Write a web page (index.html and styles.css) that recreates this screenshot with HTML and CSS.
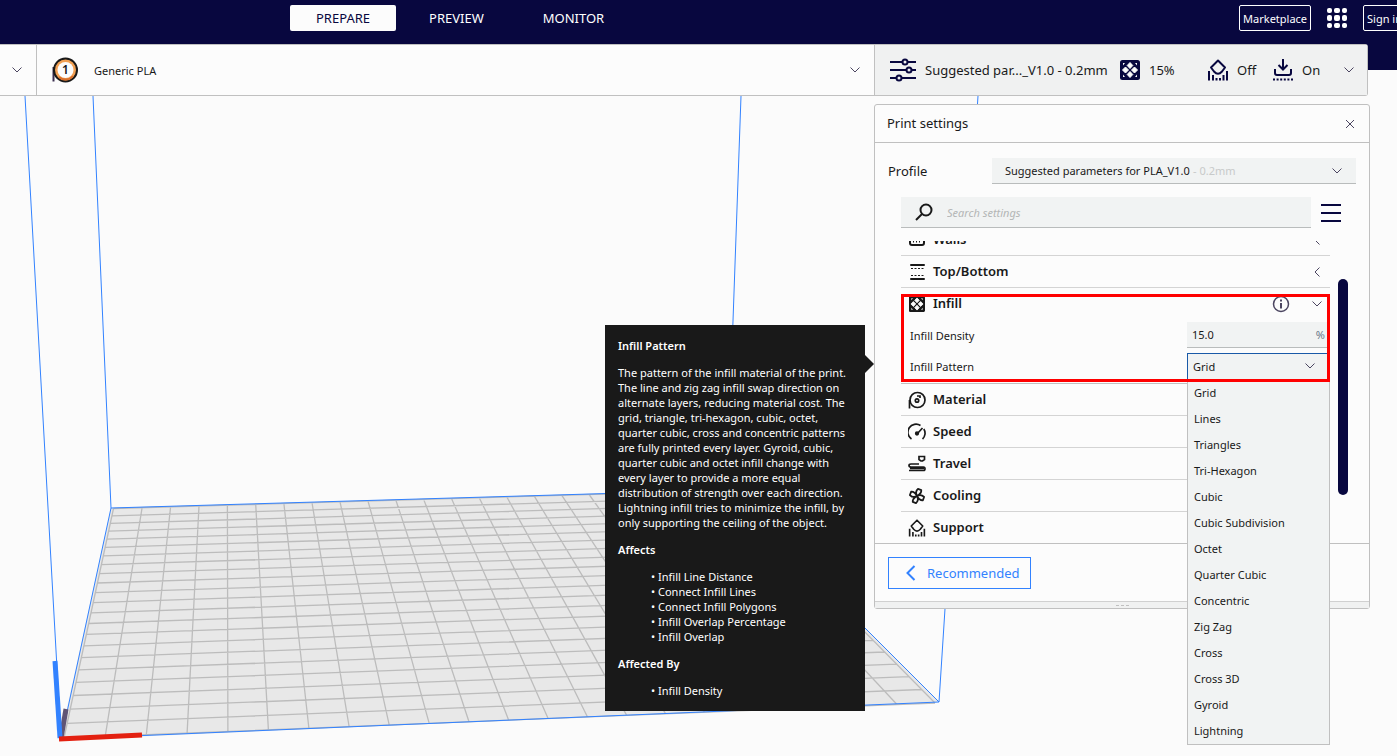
FILE: index.html
```html
<!DOCTYPE html>
<html lang="en">
<head>
<meta charset="utf-8">
<title>Print settings</title>
<link rel="stylesheet" href="styles.css">
</head>
<body>
<svg class="symbols" aria-hidden="true">
  <symbol id="chev-down" viewBox="0 0 12 12"><path d="M1.500 3.500 6 8l4.500-4.500" fill="none" stroke="currentColor"/></symbol>
  <symbol id="chev-left" viewBox="0 0 12 12"><path d="M8.500 1.500 4 6 8.500 10.500" fill="none" stroke="currentColor"/></symbol>
  <symbol id="infill" viewBox="0 0 20 20">
    <rect width="20" height="20" rx="2.500" fill="currentColor"/>
    <path d="M10 2.500 12.800 5.500 10 8.500 7.200 5.500zM10 11.500l2.800 3-2.800 3-2.800-3zM5.500 7 8.500 10 5.500 13 2.500 10zM14.500 7l3 3-3 3-3-3z" fill="#fcfcfc" stroke="#fcfcfc" stroke-linejoin="round"/>
    <path d="M3 3h2L3 5.500zM17 3h-2l2 2.500zM3 17h2l-2-2.500zM17 17h-2l2-2.500z" fill="#fcfcfc"/>
  </symbol>
  <symbol id="support" viewBox="0 0 20 22">
    <path d="M10 1.500 17 8.500 14 12.500q-4 4.500-8 0L3 8.500z" fill="none" stroke="currentColor" stroke-width="2" stroke-linejoin="round"/>
    <path d="M1 12v9.500M5 16v5.500M8.500 19v2.500M12 19v2.500M15.500 16v5.500M19 12v9.500" stroke="currentColor" stroke-width="2"/>
  </symbol>
</svg>
<div class="app">
  <svg class="scene" viewBox="0 0 1397 756" preserveAspectRatio="xMinYMin slice" aria-hidden="true">
    <path class="bed" d="M111 508 727 490 939 702 60 740z"/>
    <path class="grid" id="grid"/>
    <path class="volume" d="M25 96 61 740 111 508 93 96M111 508 727 490 741 96M727 490 939 702 978 96M61 739 939 702"/>
    <path class="axis-y" d="M61 738 66 709"/>
    <path class="axis-z" d="M60 738 55 661"/>
    <path class="axis-x" d="M59 739 142 735"/>
  </svg>

  <header class="header">
    <nav class="tabs">
      <button class="tab active">PREPARE</button>
      <button class="tab">PREVIEW</button>
      <button class="tab">MONITOR</button>
    </nav>
    <div class="account">
      <button class="outline">Marketplace</button>
      <button class="apps" aria-label="Applications">
        <svg width="20" height="20" fill="currentColor"><rect width="5" height="5" rx="2"/><rect x="7" width="6" height="5" rx="2"/><rect x="15" width="5" height="5" rx="2"/><rect y="7" width="5" height="6" rx="2"/><rect x="7" y="7" width="6" height="6" rx="2"/><rect x="15" y="7" width="5" height="6" rx="2"/><rect y="15" width="5" height="5" rx="2"/><rect x="7" y="15" width="6" height="5" rx="2"/><rect x="15" y="15" width="5" height="5" rx="2"/></svg>
      </button>
      <button class="outline">Sign in</button>
    </div>
  </header>

  <div class="stage-bar">
    <button class="printer" aria-label="Printer"><svg class="chev"><use href="#chev-down"/></svg></button>
    <button class="material">
      <svg class="spool" viewBox="0 0 28 28">
        <path d="M2.500 11v14.500" stroke="#3c3050" stroke-width="2"/>
        <circle cx="14.500" cy="14" r="11.500" fill="#f2a154" stroke="#191919" stroke-width="2"/>
        <path d="M8 21a9.500 9.500 0 0 0 14-1" fill="none" stroke="#d96f2c" stroke-width="2"/>
        <circle cx="14.500" cy="14" r="8" fill="#fcfcfc"/>
        <text x="14.500" y="18" text-anchor="middle" class="spool-no">1</text>
      </svg>
      <span>Generic PLA</span>
      <svg class="chev"><use href="#chev-down"/></svg>
    </button>
    <button class="summary">
      <svg class="sum-main" viewBox="0 0 26 24" fill="none" stroke="currentColor" stroke-width="2"><path d="M0 4h12M18 4h8M0 12h16M22 12h4M0 20h6M12 20h14"/><circle cx="15" cy="4" r="2.500"/><circle cx="19" cy="12" r="2.500"/><circle cx="9" cy="20" r="2.500"/></svg>
      <span class="sum-profile">Suggested par..._V1.0 - 0.2mm</span>
      <svg class="i20"><use href="#infill"/></svg><span class="sum-infill">15%</span>
      <svg class="i22"><use href="#support"/></svg><span class="sum-support">Off</span>
      <svg class="i22" viewBox="0 0 20 22" fill="none" stroke="currentColor" stroke-width="2"><path d="M10 0v10M5.500 6 10 10.500 14.500 6"/><path d="M2 10v4q0 2 2 2h12q2 0 2-2v-4"/><path d="M0 20.500h20" stroke-dasharray="2 1.600"/></svg><span>On</span>
      <svg class="chev"><use href="#chev-down"/></svg>
    </button>
  </div>

  <main class="workspace">
    <section class="panel">
      <div class="panel-head">
        <h1>Print settings</h1>
        <button class="close" aria-label="Close"><svg width="10" height="10" stroke="currentColor"><path d="M1 1l8 8M9 1 1 9"/></svg></button>
      </div>
      <div class="profile-row">
        <label for="profile">Profile</label>
        <div class="profile-field">
          <select id="profile"><option>Suggested parameters for PLA_V1.0</option></select>
          <span class="muted">- 0.2mm</span>
          <svg class="chev"><use href="#chev-down"/></svg>
        </div>
      </div>
      <div class="search-row">
        <div class="search">
          <svg width="18" height="18" fill="none" stroke="currentColor" stroke-width="2"><circle cx="11" cy="7" r="5.500"/><path d="M7 11 1 17"/></svg>
          <input type="search" aria-label="Search settings" placeholder="Search settings">
        </div>
        <button class="menu-btn" aria-label="Setting visibility"><svg width="20" height="18" stroke="currentColor" stroke-width="2"><path d="M0 1h20M0 9h20M0 17h20"/></svg></button>
      </div>

      <div class="settings">
        <div class="clip">
          <div class="rows">
            <button class="cat"><svg viewBox="0 0 18 18" fill="none" stroke="currentColor" stroke-width="2"><path d="M2 2v10q0 2 2 2h10q2 0 2-2V2"/><path d="M5 10.500h9" stroke-dasharray="1 2"/></svg><span>Walls</span><svg class="chev"><use href="#chev-left"/></svg></button>
            <button class="cat"><svg viewBox="0 0 18 18" fill="none" stroke="currentColor" stroke-width="2"><path d="M3 2h13M3 16h13" stroke-linecap="round"/><path d="M3 5.500h13M3 12.500h13" stroke-width="1" stroke-dasharray="2 1.500"/></svg><span>Top/Bottom</span><svg class="chev"><use href="#chev-left"/></svg></button>
            <button class="cat open"><svg viewBox="-1 -1 20 20"><use href="#infill" width="18" height="18"/></svg><span>Infill</span>
              <svg class="info" viewBox="0 0 18 18" fill="none" stroke="currentColor"><circle cx="9" cy="9" r="7.500" stroke-width="1.500"/><path d="M9 4.500v2M9 8v5.500" stroke-width="2"/></svg>
              <svg class="chev"><use href="#chev-down"/></svg></button>
            <div class="setting"><label for="density">Infill Density</label><div class="field"><input id="density" type="text" value="15.0"><span class="unit">%</span></div></div>
            <div class="setting last"><label for="pattern">Infill Pattern</label><div class="field focus"><select id="pattern"><option>Grid</option><option>Lines</option><option>Triangles</option></select><svg class="chev"><use href="#chev-down"/></svg></div></div>
            <button class="cat"><svg viewBox="0 0 18 18" fill="none" stroke="currentColor" stroke-width="1.700"><circle cx="9.500" cy="9" r="7.500"/><path d="M1.500 9v8.500"/><circle cx="9" cy="9.500" r="1.700"/><path d="M9 5h3v2"/></svg><span>Material</span><svg class="chev"><use href="#chev-left"/></svg></button>
            <button class="cat"><svg viewBox="0 0 18 18" fill="none" stroke="currentColor" stroke-width="1.700"><path d="M3.500 16A7.800 7.800 0 0 1 12.500 2.500M15.800 6a7.800 7.800 0 0 1-1.300 10M9 11l5.500-6"/><circle cx="9" cy="10.500" r="1.300" fill="currentColor"/></svg><span>Speed</span><svg class="chev"><use href="#chev-left"/></svg></button>
            <button class="cat"><svg viewBox="0 0 18 18" fill="none" stroke="currentColor" stroke-width="1.700"><path d="M11 1.500h5.500v3l-2 1.500h-1.500l-2-1.500zM11 9H3q-2 0-2 1.500T3 12h12.500q1.500 0 1.500 1.800t-1.500 1.700H1M2 13.500h14"/></svg><span>Travel</span><svg class="chev"><use href="#chev-left"/></svg></button>
            <button class="cat"><svg viewBox="0 0 18 18" fill="none" stroke="currentColor" stroke-width="1.800" stroke-linejoin="round"><g transform="rotate(20 9 9)"><path d="M9 9Q5.500 6 7.500 2h3.500q1.500 3-2 7zQ12 5.500 16 7.500V11q-3 1.500-7-2zQ12.500 12 10.500 16H7q-1.500-3 2-7zQ6 12.500 2 10.500V7q3-1.500 7 2z"/></g></svg><span>Cooling</span><svg class="chev"><use href="#chev-left"/></svg></button>
            <button class="cat"><svg viewBox="0 0 18 18"><use href="#support" width="18" height="18"/></svg><span>Support</span><svg class="chev"><use href="#chev-left"/></svg></button>
          </div>
        </div>
        <div class="highlight"></div>
        <ul class="menu" role="listbox" aria-label="Infill Pattern">
          <li role="option">Grid</li><li role="option">Lines</li><li role="option">Triangles</li><li role="option">Tri-Hexagon</li><li role="option">Cubic</li><li role="option">Cubic Subdivision</li><li role="option">Octet</li><li role="option">Quarter Cubic</li><li role="option">Concentric</li><li role="option">Zig Zag</li><li role="option">Cross</li><li role="option">Cross 3D</li><li role="option">Gyroid</li><li role="option">Lightning</li>
        </ul>
        <div class="scrollbar"></div>
      </div>

      <div class="panel-foot">
        <button class="recommended"><svg width="10" height="16" fill="none" stroke="currentColor" stroke-width="2"><path d="M8.500 1 1.500 8l7 7"/></svg>Recommended</button>
      </div>
      <div class="grip"><i></i><i></i><i></i></div>

      <aside class="tooltip" role="tooltip">
        <h2>Infill Pattern</h2>
        <p>The pattern of the infill material of the print. The line and zig zag infill swap direction on alternate layers, reducing material cost. The grid, triangle, tri-hexagon, cubic, octet, quarter cubic, cross and concentric patterns are fully printed every layer. Gyroid, cubic, quarter cubic and octet infill change with every layer to provide a more equal distribution of strength over each direction. Lightning infill tries to minimize the infill, by only supporting the ceiling of the object.</p>
        <h2>Affects</h2>
        <ul><li>Infill Line Distance</li><li>Connect Infill Lines</li><li>Connect Infill Polygons</li><li>Infill Overlap Percentage</li><li>Infill Overlap</li></ul>
        <h2>Affected By</h2>
        <ul><li>Infill Density</li></ul>
      </aside>
    </section>
  </main>
</div>
<script src="bed.js"></script>
</body>
</html>
```
FILE: bed.js
```js
// Draws the build plate grid: a square of equal cells seen in perspective.
const cells = 22;
const [a, b, c, d] = [[113.5, 508.5], [725, 490.5], [935, 703], [64, 738]];

const dx1 = b[0] - c[0], dx2 = d[0] - c[0], sx = a[0] - b[0] + c[0] - d[0];
const dy1 = b[1] - c[1], dy2 = d[1] - c[1], sy = a[1] - b[1] + c[1] - d[1];
const det = dx1 * dy2 - dx2 * dy1;
const g = (sx * dy2 - dx2 * sy) / det;
const h = (dx1 * sy - sx * dy1) / det;

function project(u, v) {
  const w = g * u + h * v + 1;
  const x = (b[0] - a[0] + g * b[0]) * u + (d[0] - a[0] + h * d[0]) * v + a[0];
  const y = (b[1] - a[1] + g * b[1]) * u + (d[1] - a[1] + h * d[1]) * v + a[1];
  return (x / w).toFixed(1) + ' ' + (y / w).toFixed(1);
}

let path = '';
for (let i = 0; i <= cells; i++) {
  const t = i / cells;
  path += `M${project(t, 0)}L${project(t, 1)}M${project(0, t)}L${project(1, t)}`;
}
document.getElementById('grid').setAttribute('d', path);
```
FILE: styles.css
```css
* { box-sizing: border-box; }
body {
  margin: 0;
  font: 11px/15px "Noto Sans", "Open Sans", sans-serif;
  color: #191919;
  background: #fbfbfb;
}
button, input, select { font: inherit; color: inherit; background: none; border: 0; padding: 0; margin: 0; border-radius: 0; appearance: none; outline: 0; }
h1, h2, p, ul { margin: 0; padding: 0; list-style: none; }
svg { display: block; flex: none; }
.symbols { position: absolute; width: 0; height: 0; }
.chev { width: 12px; height: 12px; color: #4b4560; }

.app { position: relative; min-height: 100vh; overflow: hidden; }
.scene { position: absolute; inset: 0; width: 100%; height: 100%; }
.bed { fill: #e8e8e8; }
.grid { fill: none; stroke: #bcbcbc; stroke-width: 1.3; }
.volume { fill: none; stroke: #3282ff; }
.axis-x, .axis-y, .axis-z { fill: none; stroke-width: 5; }
.axis-x { stroke: #e32010; }
.axis-y { stroke: #5f5475; }
.axis-z { stroke: #3282ff; }

.header {
  position: relative;
  display: flex;
  justify-content: space-between;
  align-items: flex-start;
  height: 70px;
  padding: 5px 0 0 290px;
  background: #08073f;
  color: #fff;
  overflow: hidden;
}
.tabs { display: flex; gap: 7px; }
.tab { height: 26px; padding: 0 26px; font-size: 13px; border-radius: 2px; }
.tab.active { background: #fcfcfc; color: #08073f; }
.account { display: flex; align-items: center; gap: 16px; margin-right: -9px; }
.outline { height: 26px; padding: 0 3px; border: 1px solid #fff; border-radius: 2px; white-space: nowrap; }

.stage-bar {
  position: relative;
  display: flex;
  height: 52px;
  margin: -26px 29px 0 0;
  background: #fcfcfc;
  border: 1px solid #c0c0c0;
  border-left: 0;
  border-radius: 0 3px 3px 0;
}
.printer { width: 37px; padding-left: 11px; border-right: 1px solid #c0c0c0; }
.material { display: flex; flex: 1; align-items: center; gap: 15px; padding: 0 13px 0 14px; text-align: left; }
.material span { flex: 1; }
.spool { width: 28px; height: 28px; }
.spool-no { font-size: 12px; font-weight: 600; fill: #191919; }
.summary { display: flex; align-items: center; width: 493px; padding: 0 12px 0 15px; font-size: 13px; text-align: left; border-left: 1px solid #c0c0c0; background: #f0f1f1; white-space: nowrap; }
.summary > svg { color: #08073f; }
.summary > .chev { margin-left: auto; color: #4b4560; }
.sum-main { width: 26px; height: 24px; }
.i20 { width: 20px; height: 20px; }
.i22 { width: 20px; height: 22px; }
.summary span { padding-left: 9px; }
.summary .sum-profile { width: 204px; }
.summary .sum-infill { width: 68px; }
.summary .sum-support { width: 45px; }

.workspace { position: relative; display: flex; justify-content: flex-end; padding: 8px 27px 0 0; }
.panel { position: relative; width: 496px; background: #fcfcfc; border: 1px solid #c0c0c0; border-radius: 3px; }
.panel-head { display: flex; justify-content: space-between; align-items: center; height: 38px; padding: 0 14px 0 12px; border-bottom: 1px solid #c0c0c0; color: #191919; }
h1 { font-size: 13px; font-weight: 400; }
.close { color: #4b4560; }
.profile-row { display: flex; justify-content: space-between; align-items: center; margin: 15px 13px 0; font-size: 13px; }
.profile-field { display: flex; align-items: center; width: 364px; height: 26px; padding: 0 13px; gap: 3px; background: #f1f3f3; border-bottom: 1px solid #b9bcbc; font-size: 11px; }
.profile-field .chev { margin-left: auto; }
.muted { color: #c8caca; }
.search-row { display: flex; align-items: center; gap: 10px; margin: 13px 28px 0 26px; }
.search { display: flex; flex: 1; align-items: center; gap: 14px; height: 31px; padding: 0 14px; background: #f1f3f3; border-bottom: 1px solid #b9bcbc; }
.search input { flex: 1; min-width: 0; }
.search input::placeholder { color: #b4b6b6; font-style: italic; opacity: 1; }
.menu-btn { color: #08073f; }

.settings { position: relative; margin-top: 13px; border-bottom: 1px solid #c0c0c0; }
.clip { height: 302px; padding: 0 39px 0 26px; overflow: hidden; }
.rows { margin-top: -17px; }
.cat { display: flex; align-items: center; gap: 7px; width: 100%; height: 32px; padding: 0 7px; border-bottom: 1px solid #d4d4d4; font-size: 13px; font-weight: 600; text-align: left; }
.cat > svg:first-child { width: 18px; height: 18px; }
.cat span { flex: 1; }
.cat.open { border-bottom-color: transparent; }
.cat .info { width: 18px; height: 18px; margin-right: 14px; color: #4b4560; }
.setting { display: flex; justify-content: space-between; align-items: center; height: 32px; padding: 0 0 2px 9px; }
.setting.last { border-bottom: 1px solid #c0c0c0; }
.field { display: flex; align-items: center; justify-content: space-between; width: 143px; height: 26px; padding: 0 5px; background: #f1f3f3; border-bottom: 1px solid #b9bcbc; }
.field input, .field select { flex: 1; min-width: 0; }
.field.focus { height: 27px; padding: 0 13px 2px 5px; border: 1px solid #1a5aa8; border-bottom: 0; }
.unit { color: #69788a; }
.highlight { position: absolute; top: 53px; left: 26px; right: 39px; height: 88px; border: 3px solid #f00; z-index: 2; }
.menu { position: absolute; top: 138px; right: 39px; width: 143px; background: #f1f3f3; border: 1px solid #c0c0c0; z-index: 1; }
.menu li { height: 26px; padding-left: 6px; line-height: 26px; }
.scrollbar { position: absolute; top: 38px; right: 21px; width: 10px; height: 216px; border-radius: 5px; background: #08073f; }

.panel-foot { padding: 13px; height: 58px; border-bottom: 1px solid #d0d0d0; }
.recommended { display: flex; align-items: center; gap: 11px; height: 32px; padding: 0 10px 0 17px; border: 1px solid #3282ff; color: #3282ff; font-size: 13px; }
.grip { display: flex; align-items: center; justify-content: center; gap: 2px; height: 6px; background: #f0f1f1; }
.grip i { width: 3px; height: 1px; background: #c0c0c0; }

.tooltip { position: absolute; top: 220px; right: 504px; display: flex; flex-direction: column; gap: 12px; width: 260px; padding: 13px; background: #191919; color: #fff; }
.tooltip::after { content: ""; position: absolute; top: 30px; left: 100%; border: 9px solid transparent; border-left-color: #191919; border-right: 0; }
.tooltip h2 { font-size: 11px; font-weight: 600; }
.tooltip li { padding-left: 33px; }
.tooltip li::before { content: "• "; }
```
